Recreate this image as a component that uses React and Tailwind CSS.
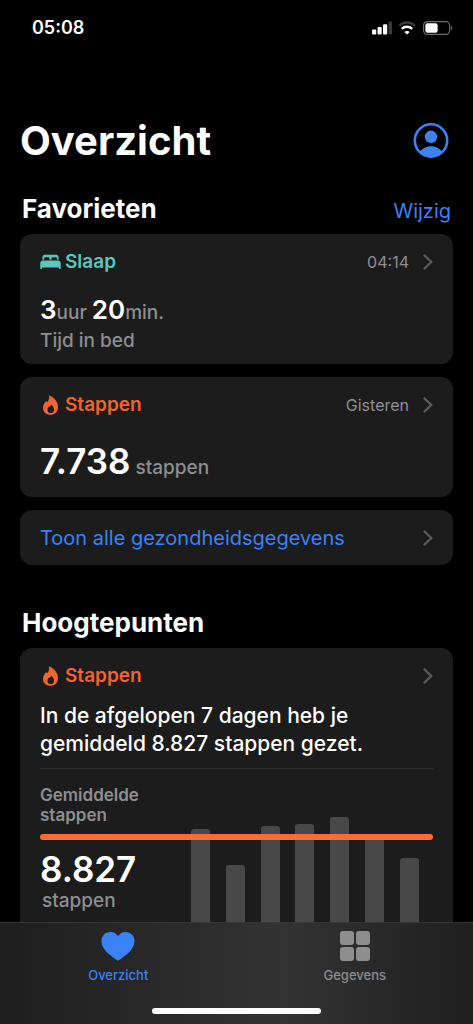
import React from 'react';

const steps = [
  { day: 'ma', height: 151 },
  { day: 'di', height: 115 },
  { day: 'wo', height: 154 },
  { day: 'do', height: 156 },
  { day: 'vr', height: 163 },
  { day: 'za', height: 142 },
  { day: 'zo', height: 122 },
];

const BedIcon = () => (
  <svg viewBox="0 0 21 16" className="w-[21px] h-4" fill="currentColor" aria-hidden="true">
    <path d="M2.400 5.800V3.600C2.400 1.900 3.400.8 5.200.8h10.600c1.800 0 2.800 1.100 2.800 2.800v2.200h-1.700V4.500c0-.8-.4-1.200-1.200-1.200h-3c-.8 0-1.200.4-1.200 1.200v1.300H9.500V4.500c0-.8-.4-1.200-1.200-1.200h-3c-.8 0-1.200.4-1.200 1.200v1.300z" />
    <path d="M3 6.400h15c1.600 0 2.700.9 2.700 2.500v5.600c0 .4-.3.600-.8.600s-.9-.2-.9-.6v-1H2v1c0 .4-.4.600-.9.600s-.8-.2-.8-.6V8.900C.3 7.300 1.400 6.400 3 6.400z" />
  </svg>
);

const FlameIcon = () => (
  <svg viewBox="0 0 16 20" className="w-[21px] h-5" fill="currentColor" aria-hidden="true">
    <path
      fillRule="evenodd"
      d="M6.200.2c5 1.600 9.300 6.300 9.300 11.800 0 4.700-3 7.800-7.600 7.800C3.400 19.800.5 16.900.5 12.700c0-2.900 1.300-4.600 3.300-6.800.3.600.6 1 1.100 1.300C6.500 5.100 7.100 2.600 6.200.2zM8.300 9.800c.1 1-.3 1.500-.8 2-.2.200-.5.200-.7 0l-.3-.3c-.9.900-1.500 2.100-1.500 3.400 0 1.900 1.200 3.200 3.200 3.200s3.300-1.300 3.300-3.400c0-2.200-1.300-4-3.200-4.900z"
    />
  </svg>
);

const ChevronIcon = () => (
  <svg
    viewBox="0 0 10 16"
    className="w-[10px] h-4 text-[#5c5c60]"
    fill="none"
    stroke="currentColor"
    strokeWidth="2.400"
    strokeLinecap="round"
    strokeLinejoin="round"
    aria-hidden="true"
  >
    <path d="M1.500 1.500 8.300 8l-6.800 6.500" />
  </svg>
);

const StatusBar = () => (
  <div className="flex h-14 shrink-0 items-center justify-between pl-8 pr-5">
    <span className="text-lg font-semibold">05:08</span>
    <div className="flex items-center gap-[6px]">
      <svg viewBox="0 0 22 14" className="w-[22px] h-[14px]" fill="#fff" aria-hidden="true">
        <rect x="2" y="8.500" width="4.200" height="5" rx="1" />
        <rect x="7.500" y="6" width="4.200" height="7.500" rx="1" />
        <rect x="13" y="3.300" width="4.200" height="10.200" rx="1" />
        <rect x="18.500" y=".5" width="3.500" height="13" rx="1" fill="#3a3a3c" />
      </svg>
      <svg viewBox="0 0 18 14" className="w-[18px] h-[14px]" fill="none" aria-hidden="true">
        <path d="M1.200 4.600c4.500-4.100 11.100-4.100 15.600 0" stroke="#3a3a3c" strokeWidth="2.400" />
        <path d="M3.800 7.900c3-2.800 7.400-2.800 10.400 0" stroke="#fff" strokeWidth="2.400" />
        <path d="M9 13.500 6.300 10.900c1.500-1.300 3.900-1.300 5.400 0z" fill="#fff" />
      </svg>
      <svg viewBox="0 0 31 14" className="w-[31px] h-[14px]" fill="none" aria-hidden="true">
        <rect x="1.600" y=".6" width="26" height="12.800" rx="3.600" stroke="#6b6b6e" strokeWidth="1.200" />
        <rect x="3.400" y="2.200" width="12.200" height="9.600" rx="2" fill="#fff" />
        <path d="M29 4.800c1.600.6 1.600 3.800 0 4.400z" fill="#6b6b6e" />
      </svg>
    </div>
  </div>
);

const CardHeader = ({ icon, title, color, time }) => (
  <div className="flex h-6 items-center justify-between">
    <div className={`flex items-center gap-1 ${color}`}>
      {icon}
      <h3 className="text-[19px] font-semibold">{title}</h3>
    </div>
    <div className="flex items-center gap-[14px] text-base text-[#8e8e93]">
      {time && <span>{time}</span>}
      <ChevronIcon />
    </div>
  </div>
);

const StepsChart = () => (
  <div className="relative flex justify-between pt-4">
    <div className="w-[151px] shrink-0 text-[#8e8e93]">
      <p className="w-28 text-[17px] leading-5 font-semibold">Gemiddelde stappen</p>
      <p className="mt-6 text-[35px] leading-10 font-semibold text-white">8.827</p>
      <p className="pl-[2px] text-[19px] leading-6 font-medium">stappen</p>
    </div>
    <div className="flex h-[195px] grow items-end justify-between pr-[14px]">
      {steps.map((step) => (
        <div
          key={step.day}
          className="w-[19px] rounded-t-[3px] bg-[#484848]"
          style={{ height: step.height }}
        />
      ))}
    </div>
    {/* average line over the bars */}
    <div className="absolute inset-x-0 top-[65px] h-[6px] rounded-full bg-[#ff6a35]" />
  </div>
);

const TabBar = () => (
  <nav className="shrink-0 border-t border-[#363636] bg-linear-to-r from-[#1e1e1e] via-[#333333] via-60% to-[#1f1f1f] pb-[10px]">
    <div className="flex h-[75px] text-[13px] leading-4 font-medium">
      <a href="#overzicht" className="flex flex-1 flex-col items-center gap-[6px] pt-2 text-[#3b82f7]">
        <svg viewBox="0 0 34 30" className="w-[34px] h-[30px]" fill="currentColor" aria-hidden="true">
          <path d="M17 29.500c-.6 0-1.300-.4-2-.9C6.300 22.700.5 16.800.5 10.300.5 4.700 4.300 1 9.200 1c3.300 0 6.100 1.600 7.800 4.200C18.700 2.600 21.500 1 24.800 1c4.900 0 8.700 3.700 8.700 9.300 0 6.500-5.800 12.400-14.500 18.300-.7.500-1.400.9-2 .9z" />
        </svg>
        Overzicht
      </a>
      <a href="#gegevens" className="flex flex-1 flex-col items-center gap-[6px] pt-2 text-[#8e8e8e]">
        <svg viewBox="0 0 30 30" className="size-[30px]" fill="currentColor" aria-hidden="true">
          <rect x="0" y="0" width="14" height="14" rx="3" />
          <rect x="16" y="0" width="14" height="14" rx="3" />
          <rect x="0" y="16" width="14" height="14" rx="3" />
          <rect x="16" y="16" width="14" height="14" rx="3" />
        </svg>
        Gegevens
      </a>
    </div>
    <div className="mx-auto mt-[10px] h-[6px] w-[169px] rounded-full bg-white" />
  </nav>
);

const App = () => {
  return (
    <div className="flex h-screen flex-col bg-black font-['Inter',sans-serif] text-white">
      <StatusBar />

      <main className="min-h-0 grow overflow-y-auto px-5 pt-[60px] [scrollbar-width:none]">
        <div className="flex h-[50px] items-center justify-between pr-1">
          <h1 className="text-[40px] leading-[50px] font-bold">Overzicht</h1>
          <button type="button" aria-label="Profiel" className="text-[#3b82f7]">
            <svg viewBox="0 0 36 36" className="size-9" fill="none" aria-hidden="true">
              <circle cx="18" cy="17.500" r="16.200" stroke="currentColor" strokeWidth="2.600" />
              <circle cx="18" cy="13.800" r="6.200" fill="currentColor" />
              <path d="M6.500 29c2.600-3.600 6.800-5.800 11.500-5.800s8.900 2.200 11.500 5.800c-2.900 3.100-7 5-11.500 5s-8.600-1.900-11.500-5z" fill="currentColor" />
            </svg>
          </button>
        </div>

        <section>
          <div className="mt-[25px] flex h-[43px] items-start justify-between px-[2px]">
            <h2 className="text-[26px] leading-9 font-bold">Favorieten</h2>
            <button type="button" className="pt-1 text-xl leading-8 text-[#3b82f7]">
              Wijzig
            </button>
          </div>

          <div className="flex flex-col gap-[13px]">
            <article className="rounded-xl bg-[#1c1c1c] px-5 pt-4 pb-[11px]">
              <CardHeader icon={<BedIcon />} title="Slaap" color="text-[#5ac8be]" time="04:14" />
              <p className="mt-5 text-[19px] leading-8 font-medium text-[#8e8e93]">
                <span className="text-[26px] font-semibold text-white">3</span>uur{' '}
                <span className="text-[26px] font-semibold text-white">20</span>min.
              </p>
              <p className="text-[19px] leading-6 font-medium text-[#8e8e93]">Tijd in bed</p>
            </article>

            <article className="rounded-xl bg-[#1c1c1c] px-5 pt-4 pb-[9px]">
              <CardHeader icon={<FlameIcon />} title="Stappen" color="text-[#f1632f]" time="Gisteren" />
              <p className="mt-6 text-[19px] leading-10 font-medium text-[#8e8e93]">
                <span className="text-[35px] font-semibold text-white">7.738</span> stappen
              </p>
            </article>

            <a
              href="#alle"
              className="flex h-[55px] items-center justify-between rounded-xl bg-[#1c1c1c] px-5 text-xl text-[#3b82f7]"
            >
              Toon alle gezondheidsgegevens
              <ChevronIcon />
            </a>
          </div>
        </section>

        <section className="mt-10">
          <h2 className="mb-[7px] px-[2px] text-[26px] leading-9 font-bold">Hoogtepunten</h2>
          <article className="rounded-xl bg-[#1c1c1c] px-5 pt-4">
            <CardHeader icon={<FlameIcon />} title="Stappen" color="text-[#f1632f]" />
            <p className="mt-[14px] border-b border-[#303032] pb-[10px] text-[21px] leading-7 font-medium">
              In de afgelopen 7 dagen heb je gemiddeld 8.827 stappen gezet.
            </p>
            <StepsChart />
          </article>
        </section>
      </main>

      <TabBar />
    </div>
  );
};

export default App;
